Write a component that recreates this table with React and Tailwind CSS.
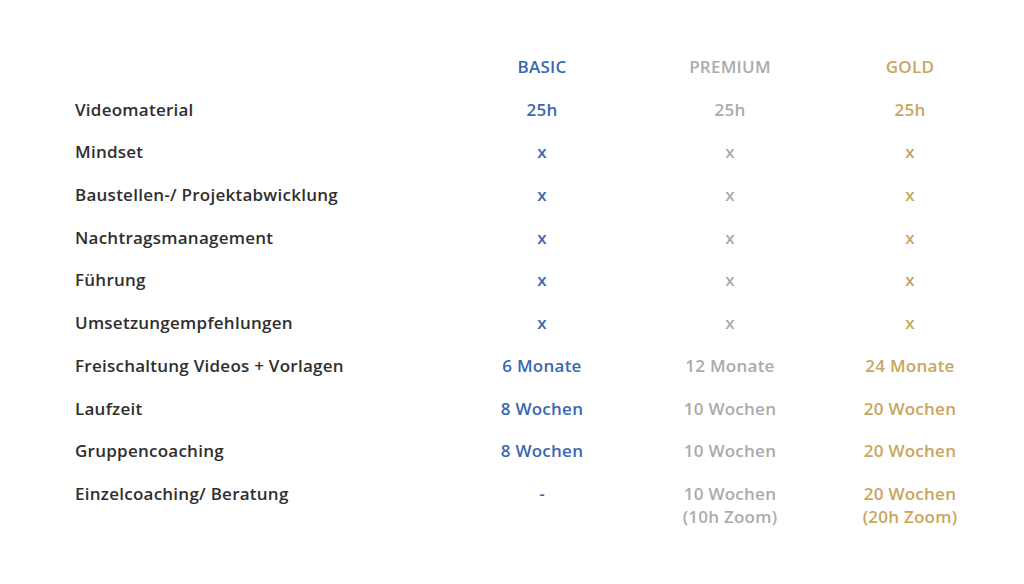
const rows = [
  { label: "Videomaterial", basic: "25h", premium: "25h", gold: "25h" },
  { label: "Mindset", basic: "x", premium: "x", gold: "x" },
  { label: "Baustellen-/ Projektabwicklung", basic: "x", premium: "x", gold: "x" },
  { label: "Nachtragsmanagement", basic: "x", premium: "x", gold: "x" },
  { label: "Führung", basic: "x", premium: "x", gold: "x" },
  { label: "Umsetzungempfehlungen", basic: "x", premium: "x", gold: "x" },
  { label: "Freischaltung Videos + Vorlagen", basic: "6 Monate", premium: "12 Monate", gold: "24 Monate" },
  { label: "Laufzeit", basic: "8 Wochen", premium: "10 Wochen", gold: "20 Wochen" },
  { label: "Gruppencoaching", basic: "8 Wochen", premium: "10 Wochen", gold: "20 Wochen" },
  { label: "Einzelcoaching/ Beratung", basic: "-", premium: ["10 Wochen", "(10h Zoom)"], gold: ["20 Wochen", "(20h Zoom)"] },
];

function Cell({ value, color }) {
  const lines = Array.isArray(value) ? value : [value];
  return (
    <div className={`text-center pt-[10px] h-full ${color}`}>
      {lines.map((l, i) => (
        <div key={i}>{l}</div>
      ))}
    </div>
  );
}

export default function App() {
  return (
    <div
      className="w-[1024px] h-[584px] bg-white pt-[45px] pl-[75px] text-[17px] leading-[23px] tracking-[0.25px] font-semibold text-[#2f2f2f]"
      style={{ fontFamily: "'Open Sans', sans-serif" }}
    >
      <div className="grid grid-cols-[377px_180px_196px_164px] auto-rows-[42.7px]">
        <div />
        <Cell value="BASIC" color="text-[#3a68b0]" />
        <Cell value="PREMIUM" color="text-[#ababab]" />
        <Cell value="GOLD" color="text-[#c9a65e]" />
        {rows.map((r) => (
          <div key={r.label} className="contents">
            <div className="pt-[10px]">{r.label}</div>
            <Cell value={r.basic} color="text-[#3a68b0]" />
            <Cell value={r.premium} color="text-[#ababab]" />
            <Cell value={r.gold} color="text-[#c9a65e]" />
          </div>
        ))}
      </div>
    </div>
  );
}
